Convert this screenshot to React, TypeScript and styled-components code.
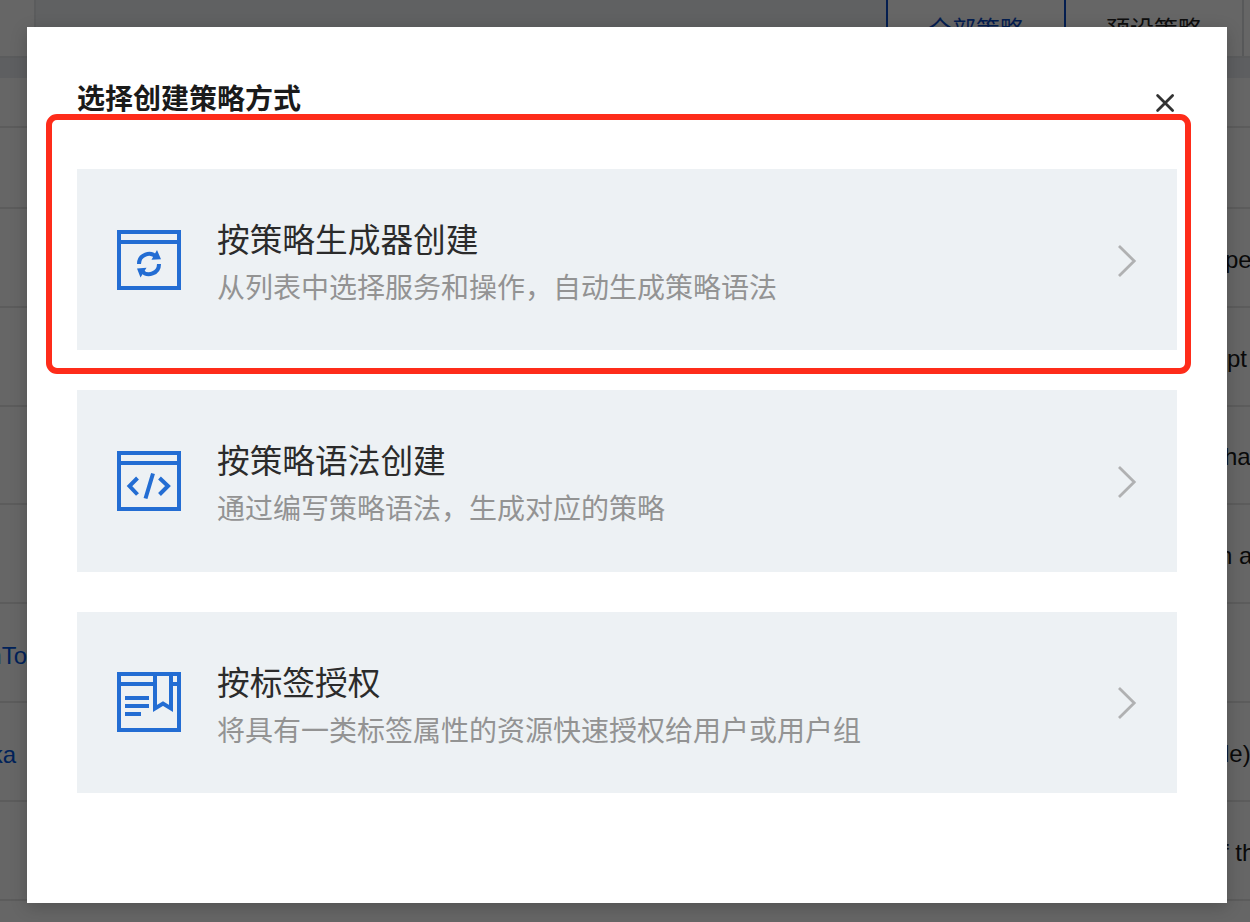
import * as React from "react"
import styled, { createGlobalStyle } from "styled-components"

const GlobalStyle = createGlobalStyle`
  body {
    margin: 0;
    overflow: hidden;
    font-family: "Liberation Sans", "Noto Sans CJK SC", sans-serif;
  }
`
const Screen = styled.div`
  background-color: #fff;
  height: 922px;
  overflow: hidden;
  position: relative;
  width: 1250px;
`
const TabBar = styled.div`
  background-color: #f0f3f6;
  border-bottom: 2px solid #e3e5e8;
  box-sizing: border-box;
  display: flex;
  height: 58px;
`
const TabBarStart = styled.div`
  background-color: #fff;
  border-right: 2px solid #e3e5e8;
  width: 34px;
`
const TabBarSpace = styled.div`
  flex: 1;
`
const Tab = styled.div<{ $active?: boolean }>`
  background-color: #fff;
  border-left: 2px solid #0a4bc8;
  box-sizing: border-box;
  color: ${(p) => (p.$active ? "#0a4bc8" : "#252525")};
  font-size: 24px;
  line-height: 59px;
  text-align: center;
  width: 178px;
`
const TabBarEnd = styled.div`
  background-color: #fff;
  border-left: 2px solid #dcdee0;
  width: 6px;
`
const Strip = styled.div`
  background-color: #ebeef3;
  height: 20px;
`
const TableRow = styled.div<{ $height: number }>`
  align-items: center;
  border-bottom: 2px solid #e5e5e5;
  box-sizing: border-box;
  display: flex;
  font-size: 24px;
  height: ${(p) => p.$height}px;
  justify-content: space-between;
  line-height: 28px;
  padding-top: 4px;
  white-space: nowrap;
`
const NameCell = styled.div<{ $inset: number }>`
  box-sizing: border-box;
  color: #0055e0;
  display: flex;
  justify-content: flex-end;
  overflow: hidden;
  padding: 2px ${(p) => p.$inset}px 0 0;
  width: 30px;
`
const NoteCell = styled.div<{ $inset: number }>`
  box-sizing: border-box;
  color: #1a1a1a;
  overflow: hidden;
  padding-left: ${(p) => p.$inset}px;
  width: 50px;
`
const Overlay = styled.div`
  background-color: rgba(0, 0, 0, 0.6);
  box-sizing: border-box;
  inset: 0;
  padding: 27px 23px 19px 27px;
  position: absolute;
`
const Dialog = styled.div`
  background-color: #fff;
  box-shadow: 0 4px 16px rgba(0, 0, 0, 0.2);
  box-sizing: border-box;
  height: 876px;
  padding: 50px;
`
const DialogHeader = styled.div`
  display: flex;
  height: 92px;
  justify-content: space-between;
`
const DialogTitle = styled.div`
  color: #1a1a1a;
  font-size: 28px;
  font-weight: bold;
  line-height: 46px;
`
const CloseButton = styled.button`
  background: none;
  border: 0;
  height: 24px;
  margin-top: 14px;
  padding: 0;
  width: 24px;
  svg {
    display: block;
  }
`
const OptionList = styled.div`
  display: flex;
  flex-direction: column;
  gap: 40px;
`
const Option = styled.div<{ $height: number }>`
  align-items: flex-start;
  background-color: #edf1f4;
  box-sizing: border-box;
  display: flex;
  height: ${(p) => p.$height}px;
  padding: 0 40px;
  position: relative;
`
const OptionIcon = styled.div<{ $top: number }>`
  padding-top: ${(p) => p.$top}px;
  svg {
    display: block;
  }
`
const OptionText = styled.div`
  flex: 1;
  padding: 45px 0 0 36px;
`
const OptionTitle = styled.div`
  color: #2b2b2b;
  font-size: 32.7px;
  line-height: 53px;
`
const OptionDescription = styled.div`
  color: #939393;
  font-size: 28px;
  line-height: 44px;
`
const Highlight = styled.div`
  border: 6px solid #fe2c1a;
  border-radius: 11px;
  bottom: -24px;
  left: -31px;
  position: absolute;
  right: -14px;
  top: -55px;
`

const WindowIcon = ({ children, bar = "M2 12h60" }: { children: React.ReactNode; bar?: string }) => (
  <svg width="64" height="60" viewBox="0 0 64 60" fill="none" stroke="#236dd3" strokeWidth="4">
    <path d="M2 2h60v56H2z" />
    <path d={bar} />
    {children}
  </svg>
)

const RefreshIcon = () => (
  <WindowIcon>
    <path d="M22 34a10 10 0 0 1 17.5-6.7M42 34a10 10 0 0 1-17.5 6.7" />
    <path d="M40 20L44 29.3L34.5 29.8zM23.5 47.5L20 38.5L29.5 37.8z" fill="#236dd3" stroke="none" />
  </WindowIcon>
)

const CodeIcon = () => (
  <WindowIcon>
    <path d="M20.5 27L12.5 35L20.5 43.5M42.5 27L51 35L42.5 43.5M36 22.5L28.5 47.5" />
  </WindowIcon>
)

const BookmarkIcon = () => (
  <WindowIcon bar="M2 12h36M54 12h8">
    <path d="M8 26h24M8 34h24M8 42h16" />
    <path d="M38 2v34.5L46 31.5L54 36.5V2" />
  </WindowIcon>
)

const Chevron = () => (
  <svg width="20" height="34" viewBox="0 0 20 34" fill="none" stroke="#b0b1b2" strokeWidth="2.8">
    <path d="M2 2l15.2 15L2 32" />
  </svg>
)

const rows = [
  { height: 50 },
  { height: 81 },
  { height: 99, note: "pe", noteInset: 25 },
  { height: 99, note: "pt", noteInset: 27 },
  { height: 98, note: "ha", noteInset: 24 },
  { height: 99, note: "n a", noteInset: 19 },
  { height: 99, name: "nTo", nameInset: 3 },
  { height: 99, name: "ka", nameInset: 14, note: "le)", noteInset: 24 },
  { height: 99, note: "f th", noteInset: 22 },
  { height: 99 },
]

const options = [
  {
    icon: <RefreshIcon />,
    title: "按策略生成器创建",
    description: "从列表中选择服务和操作，自动生成策略语法",
    height: 181,
    iconTop: 61,
    highlighted: true,
  },
  {
    icon: <CodeIcon />,
    title: "按策略语法创建",
    description: "通过编写策略语法，生成对应的策略",
    height: 182,
    iconTop: 61,
  },
  {
    icon: <BookmarkIcon />,
    title: "按标签授权",
    description: "将具有一类标签属性的资源快速授权给用户或用户组",
    height: 181,
    iconTop: 60,
  },
]

const App: React.FC = () => (
  <Screen>
    <GlobalStyle />
    <TabBar>
      <TabBarStart />
      <TabBarSpace />
      <Tab $active>全部策略</Tab>
      <Tab>预设策略</Tab>
      <TabBarEnd />
    </TabBar>
    <Strip />
    {rows.map((row, i) => (
      <TableRow key={i} $height={row.height}>
        <NameCell $inset={row.nameInset || 0}>{row.name}</NameCell>
        <NoteCell $inset={row.noteInset || 0}>{row.note}</NoteCell>
      </TableRow>
    ))}
    <Overlay>
      <Dialog>
        <DialogHeader>
          <DialogTitle>选择创建策略方式</DialogTitle>
          <CloseButton aria-label="关闭">
            <svg width="24" height="24" viewBox="0 0 24 24" stroke="#333" strokeWidth="2.8" strokeLinecap="round">
              <path d="M4.6 4.4l15 15M19.6 4.4l-15 15" />
            </svg>
          </CloseButton>
        </DialogHeader>
        <OptionList>
          {options.map((option) => (
            <Option key={option.title} $height={option.height}>
              <OptionIcon $top={option.iconTop}>{option.icon}</OptionIcon>
              <OptionText>
                <OptionTitle>{option.title}</OptionTitle>
                <OptionDescription>{option.description}</OptionDescription>
              </OptionText>
              <OptionIcon $top={option.iconTop + 14}>
                <Chevron />
              </OptionIcon>
              {option.highlighted && <Highlight />}
            </Option>
          ))}
        </OptionList>
      </Dialog>
    </Overlay>
  </Screen>
)

export default App
